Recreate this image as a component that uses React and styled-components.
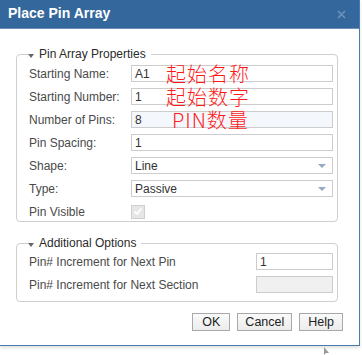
import React from 'react';
import styled, { createGlobalStyle } from 'styled-components';

const GlobalStyle = createGlobalStyle`
  html, body {
    margin: 0;
    padding: 0;
    background: #ffffff;
  }
  body {
    font-family: "Liberation Sans", Arial, sans-serif;
  }
`;

const Page = styled.div`
  position: relative;
  width: 362px;
  height: 355px;
  overflow: hidden;
  background: #ffffff;
`;

const Dialog = styled.div`
  width: 360px;
  height: 346px;
  box-sizing: border-box;
  border-right: 1px solid #4a79ad;
  border-bottom: 1px solid #4a79ad;
  box-shadow: 0 2px 3px rgba(0, 0, 0, 0.12);
  display: flex;
  flex-direction: column;
  background: #ffffff;
`;

const TitleBar = styled.div`
  height: 29px;
  flex: none;
  background: #34679c;
  border-bottom: 1px solid #6b8fb8;
  display: flex;
  align-items: center;
  justify-content: space-between;
  padding: 0 13px 0 8px;
  box-sizing: border-box;
`;

const Title = styled.span`
  color: #ffffff;
  font-weight: bold;
  font-size: 14px;
  margin-top: -2px;
`;

const Body = styled.div`
  padding: 17px 21px 0 16px;
  display: flex;
  flex-direction: column;
`;

const Group = styled.fieldset`
  margin: 0;
  padding: ${(p) => p.$pad};
  border: 1px solid #cfcfcf;
  border-radius: 4px;
  display: flex;
  flex-direction: column;
  gap: ${(p) => p.$gap}px;
  & + & {
    margin-top: 13px;
  }
`;

const Legend = styled.legend`
  padding: 0 5px 0 0;
  margin-left: -1px;
  font-size: 12px;
  line-height: 16px;
  color: #2b2b2b;
  display: flex;
  align-items: center;
  gap: 5px;
`;

const Caret = styled.span`
  width: 0;
  height: 0;
  border-left: 3px solid transparent;
  border-right: 3px solid transparent;
  border-top: 4px solid #666;
  margin-top: 3px;
`;

const Row = styled.div`
  display: flex;
  align-items: center;
  height: 17px;
`;

const Label = styled.span`
  width: ${(p) => p.$w}px;
  flex: none;
  font-size: 12px;
  color: #4a4a4a;
`;

const Field = styled.div`
  position: relative;
  width: ${(p) => p.$w}px;
  height: 17px;
  box-sizing: border-box;
  border: 1px solid #cccccc;
  background: ${(p) => p.$bg || '#ffffff'};
  font-size: 12px;
  color: #333;
  padding-left: 3px;
  display: flex;
  align-items: center;
`;

const Arrow = styled.span`
  position: absolute;
  right: 6px;
  top: 6px;
  width: 0;
  height: 0;
  border-left: 4px solid transparent;
  border-right: 4px solid transparent;
  border-top: 4px solid #93a9c6;
`;

const Note = styled.span`
  position: absolute;
  left: ${(p) => p.$left}px;
  top: -3px;
  font-family: "Noto Sans CJK SC", "Liberation Sans", sans-serif;
  font-size: 20px;
  line-height: 21px;
  font-weight: 300;
  color: #ff1a1a;
  white-space: nowrap;
  letter-spacing: 1px;
`;

const Check = styled.span`
  width: 14px;
  height: 14px;
  box-sizing: border-box;
  border: 1px solid #cfcfcf;
  background: #e6e6e6;
  display: flex;
  align-items: center;
  justify-content: center;
`;

const Buttons = styled.div`
  display: flex;
  justify-content: flex-end;
  gap: 7px;
  padding: 11px 0 0;
  margin-right: -5px;
`;

const Button = styled.button`
  height: 18px;
  padding: 0 ${(p) => p.$px}px;
  border: 1px solid #a9a9a9;
  background: linear-gradient(#fafafa, #ececec);
  font-family: "Liberation Sans", Arial, sans-serif;
  font-size: 12.5px;
  color: #222;
  line-height: 16px;
`;

const Cursor = styled.svg`
  position: absolute;
  left: 323px;
  top: 347px;
`;

const props = [
  { label: 'Starting Name:', value: 'A1', note: '起始名称', left: 34 },
  { label: 'Starting Number:', value: '1', note: '起始数字', left: 34 },
  { label: 'Number of Pins:', value: '8', note: 'PIN数量', left: 40, bg: '#f4f8fc' },
  { label: 'Pin Spacing:', value: '1' },
  { label: 'Shape:', value: 'Line', select: true },
  { label: 'Type:', value: 'Passive', select: true },
];

export default function App() {
  return (
    <Page>
      <GlobalStyle />
      <Dialog>
        <TitleBar>
          <Title>Place Pin Array</Title>
          <svg width="9" height="9" viewBox="0 0 9 9">
            <path d="M1 1 L8 8 M8 1 L1 8" stroke="#6f92bb" strokeWidth="1.6" fill="none" />
          </svg>
        </TitleBar>
        <Body>
          <Group $pad="3px 4px 1px 12px" $gap={6}>
            <Legend>
              <Caret />
              Pin Array Properties
            </Legend>
            {props.map((r) => (
              <Row key={r.label}>
                <Label $w={102}>{r.label}</Label>
                <Field $w={202} $bg={r.bg}>
                  {r.value}
                  {r.note && <Note $left={r.left}>{r.note}</Note>}
                  {r.select && <Arrow />}
                </Field>
              </Row>
            ))}
            <Row>
              <Label $w={102}>Pin Visible</Label>
              <Check>
                <svg width="10" height="9" viewBox="0 0 10 9">
                  <path d="M1.5 4.5 L4 7 L8.5 1.5" stroke="#ffffff" strokeWidth="1.8" fill="none" />
                </svg>
              </Check>
            </Row>
          </Group>
          <Group $pad="2px 4px 8px 12px" $gap={6}>
            <Legend>
              <Caret />
              Additional Options
            </Legend>
            <Row>
              <Label $w={227}>Pin# Increment for Next Pin</Label>
              <Field $w={77}>1</Field>
            </Row>
            <Row>
              <Label $w={227}>Pin# Increment for Next Section</Label>
              <Field $w={77} $bg="#f0f0f0" />
            </Row>
          </Group>
          <Buttons>
            <Button $px={9}>OK</Button>
            <Button $px={7}>Cancel</Button>
            <Button $px={8}>Help</Button>
          </Buttons>
        </Body>
      </Dialog>
      <Cursor width="8" height="8" viewBox="0 0 8 8">
        <path d="M1 0 L1 8 L3 6 L6 6 Z" fill="#9a9a9a" />
      </Cursor>
    </Page>
  );
}
